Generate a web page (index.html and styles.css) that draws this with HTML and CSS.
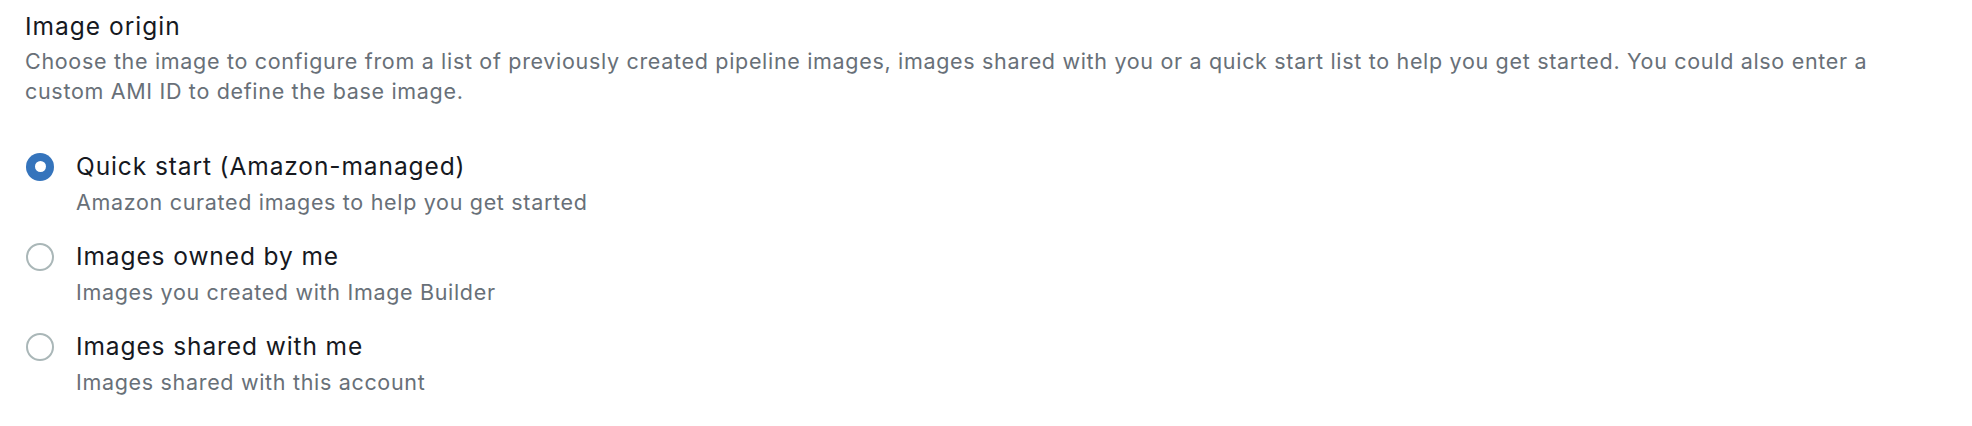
FILE: index.html
```html
<!DOCTYPE html>
<html lang="en">
<head>
<meta charset="utf-8">
<title>Image origin</title>
<link rel="stylesheet" href="styles.css">
</head>
<body>
<section class="field">
  <h2 class="field-label">Image origin</h2>
  <p class="field-description">Choose the image to configure from a list of previously created pipeline images, images shared with you or a quick start list to help you get started. You could also enter a custom AMI ID to define the base image.</p>
  <div class="radio-group" role="radiogroup">
    <label class="radio-option">
      <span class="radio checked"></span>
      <span class="radio-text">
        <span class="radio-label">Quick start (Amazon-managed)</span>
        <span class="radio-description">Amazon curated images to help you get started</span>
      </span>
    </label>
    <label class="radio-option">
      <span class="radio"></span>
      <span class="radio-text">
        <span class="radio-label">Images owned by me</span>
        <span class="radio-description">Images you created with Image Builder</span>
      </span>
    </label>
    <label class="radio-option">
      <span class="radio"></span>
      <span class="radio-text">
        <span class="radio-label">Images shared with me</span>
        <span class="radio-description">Images shared with this account</span>
      </span>
    </label>
  </div>
</section>
</body>
</html>
```
FILE: styles.css
```css
html, body {
  margin: 0;
  padding: 0;
  background: #ffffff;
}

body {
  font-family: "Inter", "Liberation Sans", sans-serif;
  color: #16191f;
}

.field {
  padding: 10px 0 0 25px;
}

.field-label {
  margin: 0;
  font-size: 24.5px;
  font-weight: 400;
  line-height: 33px;
  letter-spacing: 1px;
  color: #16191f;
}

.field-description {
  margin: 3px 0 0;
  max-width: 1880px;
  font-size: 21.5px;
  line-height: 30px;
  letter-spacing: 0.68px;
  color: #687078;
}

.radio-group {
  display: flex;
  flex-direction: column;
  gap: 23px;
  margin-top: 44px;
}

.radio-option {
  display: flex;
  align-items: flex-start;
  gap: 22px;
}

.radio {
  flex: none;
  box-sizing: border-box;
  width: 28px;
  height: 28px;
  margin: 2.5px 0 0 1px;
  border: 2px solid #aab7b8;
  border-radius: 50%;
  background: #ffffff;
  display: flex;
  align-items: center;
  justify-content: center;
}

.radio.checked {
  border: none;
  background: #3574bc;
}

.radio.checked::after {
  content: "";
  width: 11px;
  height: 11px;
  border-radius: 50%;
  background: #ffffff;
}

.radio-text {
  display: flex;
  flex-direction: column;
  gap: 4px;
}

.radio-label {
  font-size: 24.5px;
  line-height: 33px;
  letter-spacing: 0.9px;
  color: #16191f;
}

.radio-description {
  font-size: 21.5px;
  line-height: 30px;
  letter-spacing: 0.68px;
  color: #687078;
}
```
